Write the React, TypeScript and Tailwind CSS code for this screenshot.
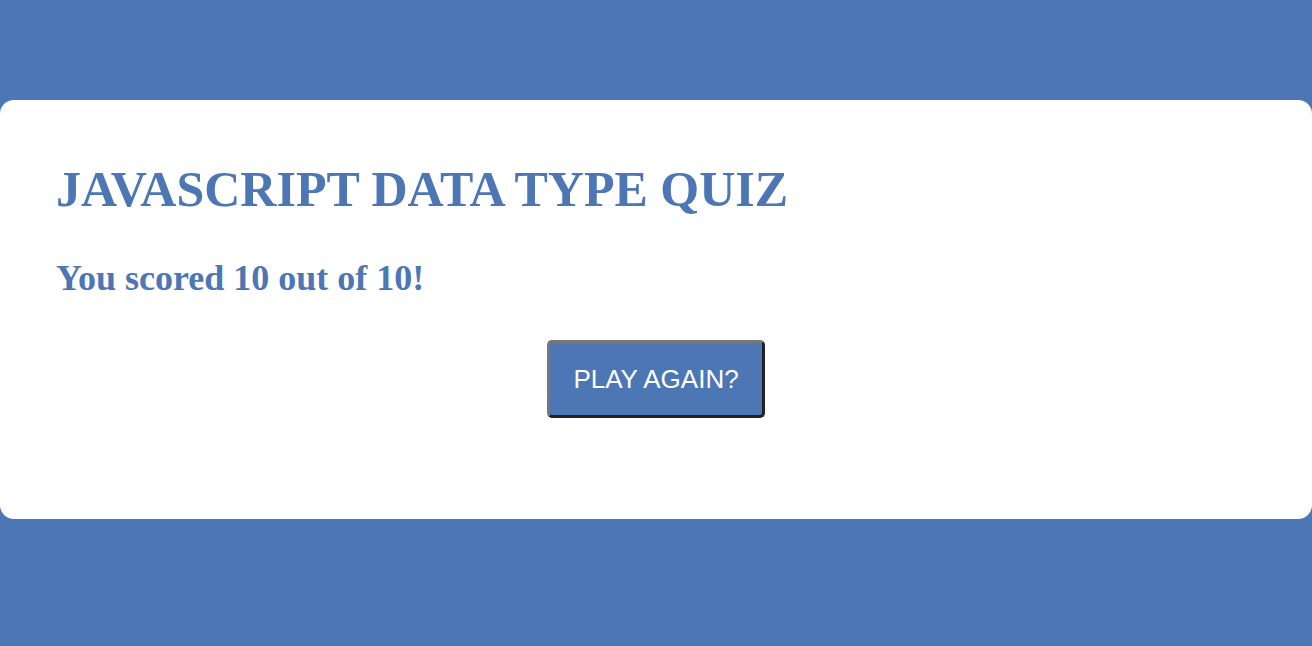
export default function App() {
  return (
    <div className="min-h-[646px] bg-[#4c76b4] pt-[100px] pb-[127px]">
      <div className="rounded-[14px] bg-white px-[56px] pt-[59px] pb-[101px]">
        <h1 className="font-['Liberation_Serif',serif] text-[50px] font-bold leading-[1.2] text-[#4c76b4]">
          JAVASCRIPT DATA TYPE QUIZ
        </h1>
        <h2 className="mt-[38px] font-['Liberation_Serif',serif] text-[36px] font-bold leading-[1.2] text-[#4c76b4]">
          You scored 10 out of 10!
        </h2>
        <div className="mt-[40px] flex justify-center">
          <button className="h-[78px] rounded-[5px] border-[3px] border-t-[#777] border-l-[#777] border-b-[#222] border-r-[#222] bg-[#4c76b4] px-[23px] font-['Liberation_Sans',sans-serif] text-[26px] text-white">
            PLAY AGAIN?
          </button>
        </div>
      </div>
    </div>
  );
}
